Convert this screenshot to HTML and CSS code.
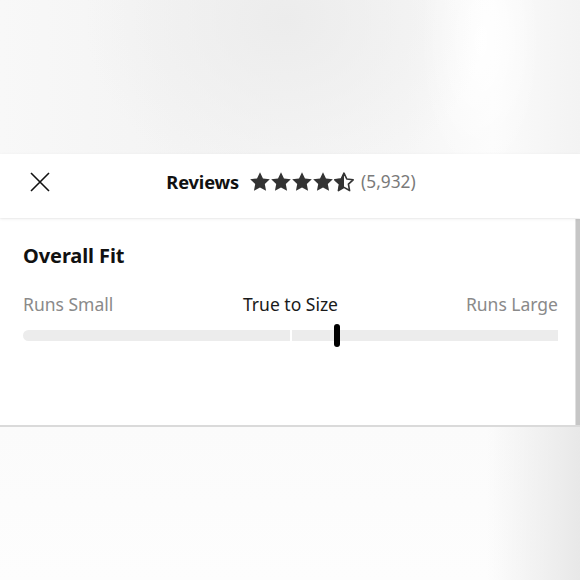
FILE: index.html
```html
<!DOCTYPE html>
<html lang="en">
<head>
<meta charset="utf-8">
<title>Reviews</title>
<link rel="stylesheet" href="styles.css">
</head>
<body>
<div class="backdrop-top"></div>
<header class="header">
  <div class="close-cell">
    <button class="close" aria-label="Close">
      <svg width="20" height="20" viewBox="0 0 20 20"><path d="M1 1 L19 19 M19 1 L1 19" stroke="#111" stroke-width="1.6" fill="none"/></svg>
    </button>
  </div>
  <div class="title">
    <span class="title-text">Reviews</span>
    <span class="stars">
      <svg class="star" viewBox="1.6 1.6 20.8 20.8"><path d="M12 1.8l3.1 6.5 7.1.9-5.2 4.9 1.3 7-6.3-3.4-6.3 3.4 1.3-7L1.8 9.2l7.1-.9z" fill="#333"/></svg>
      <svg class="star" viewBox="1.6 1.6 20.8 20.8"><path d="M12 1.8l3.1 6.5 7.1.9-5.2 4.9 1.3 7-6.3-3.4-6.3 3.4 1.3-7L1.8 9.2l7.1-.9z" fill="#333"/></svg>
      <svg class="star" viewBox="1.6 1.6 20.8 20.8"><path d="M12 1.8l3.1 6.5 7.1.9-5.2 4.9 1.3 7-6.3-3.4-6.3 3.4 1.3-7L1.8 9.2l7.1-.9z" fill="#333"/></svg>
      <svg class="star" viewBox="1.6 1.6 20.8 20.8"><path d="M12 1.8l3.1 6.5 7.1.9-5.2 4.9 1.3 7-6.3-3.4-6.3 3.4 1.3-7L1.8 9.2l7.1-.9z" fill="#333"/></svg>
      <svg class="star" viewBox="1.6 1.6 20.8 20.8"><path d="M12 2.8l2.9 6.1 6.6.8-4.9 4.6 1.2 6.6L12 17.6l-5.8 3.3 1.2-6.6-4.9-4.6 6.6-.8z" fill="none" stroke="#333" stroke-width="1.7" stroke-linejoin="round"/><path d="M12 1.8v15.9l-6.3 3.4 1.3-7L1.8 9.2l7.1-.9z" fill="#333"/></svg>
    </span>
    <span class="count">(5,932)</span>
  </div>
  <div></div>
</header>
<section class="panel">
  <div class="panel-body">
    <h2 class="fit-title">Overall Fit</h2>
    <div class="fit-labels">
      <span class="lbl lbl-muted">Runs Small</span>
      <span class="lbl lbl-center">True to Size</span>
      <span class="lbl lbl-muted lbl-right">Runs Large</span>
    </div>
    <div class="track">
      <div class="seg"></div>
      <div class="seg"></div>
      <div class="thumb" style="left: 58.2%"></div>
    </div>
  </div>
  <div class="scrollbar"></div>
</section>
<div class="backdrop-bottom"></div>
</body>
</html>
```
FILE: styles.css
```css
html, body {
  margin: 0;
  padding: 0;
  height: 580px;
  overflow: hidden;
  font-family: "Noto Sans", "Open Sans", sans-serif;
  background: #fafafa;
}

.backdrop-top {
  height: 154px;
  background:
    radial-gradient(ellipse 200px 170px at 285px 20px, #ececec 0%, rgba(236,236,236,0) 100%),
    radial-gradient(ellipse 60px 140px at 480px 40px, #ffffff 0%, rgba(255,255,255,0) 100%),
    linear-gradient(90deg, #f8f8f8 0%, #f4f4f4 30%, #f6f6f6 70%, #fbfbfb 85%, #f3f3f3 100%);
}

.header {
  height: 64px;
  box-sizing: border-box;
  padding-bottom: 9px;
  background: #fff;
  display: grid;
  grid-template-columns: 1fr auto 1fr;
  align-items: center;
  position: relative;
  z-index: 2;
  box-shadow: 0 1px 3px rgba(0,0,0,0.08);
}

.close-cell {
  padding-left: 30px;
  display: flex;
  align-items: center;
}

.close {
  border: 0;
  background: none;
  padding: 0;
  width: 20px;
  height: 20px;
  display: block;
}

.close svg { display: block; }

.title {
  display: flex;
  align-items: center;
  margin-left: 2px;
}

.title-text {
  font-weight: 700;
  font-size: 18.3px;
  color: #111;
  letter-spacing: -0.15px;
  margin-right: 11px;
}

.stars {
  display: flex;
  gap: 1px;
  margin-right: 7px;
}

.star {
  width: 20px;
  height: 20px;
  display: block;
}

.count {
  font-size: 17.3px;
  color: #7a7a7a;
}

.panel {
  height: 206px;
  background: #fff;
  display: flex;
  border-bottom: 2px solid #dadada;
  margin-top: 1px;
}

.panel-body {
  flex: 1;
  padding: 23px 17px 0 23px;
}

.scrollbar {
  width: 4px;
  background: #c6c6c6;
  border-left: 1px solid #e0e0e0;
}

.fit-title {
  margin: 0;
  font-size: 20px;
  font-weight: 700;
  color: #111;
  line-height: 28px;
  letter-spacing: -0.1px;
}

.fit-labels {
  display: grid;
  grid-template-columns: 1fr auto 1fr;
  margin-top: 22px;
  font-size: 17.5px;
  line-height: 24px;
}

.lbl-muted { color: #8a8a8a; }
.lbl-center { color: #1a1a1a; }
.lbl-right { text-align: right; }

.track {
  position: relative;
  margin-top: 14px;
  height: 11px;
  display: flex;
  gap: 2px;
}

.seg {
  flex: 1;
  background: #ececec;
}

.seg:first-child { border-radius: 6px 0 0 6px; }
.seg:last-child { border-radius: 0 6px 6px 0; }

.thumb {
  position: absolute;
  top: -6px;
  width: 6px;
  height: 23px;
  background: #000;
  border-radius: 3px;
}

.backdrop-bottom {
  height: 153px;
  background:
    linear-gradient(90deg, rgba(255,255,255,0) 0%, rgba(255,255,255,0) 84%, #ececec 97%, #e8e8e8 100%),
    linear-gradient(180deg, #fbfbfb 0%, #fdfdfd 100%);
}
```
